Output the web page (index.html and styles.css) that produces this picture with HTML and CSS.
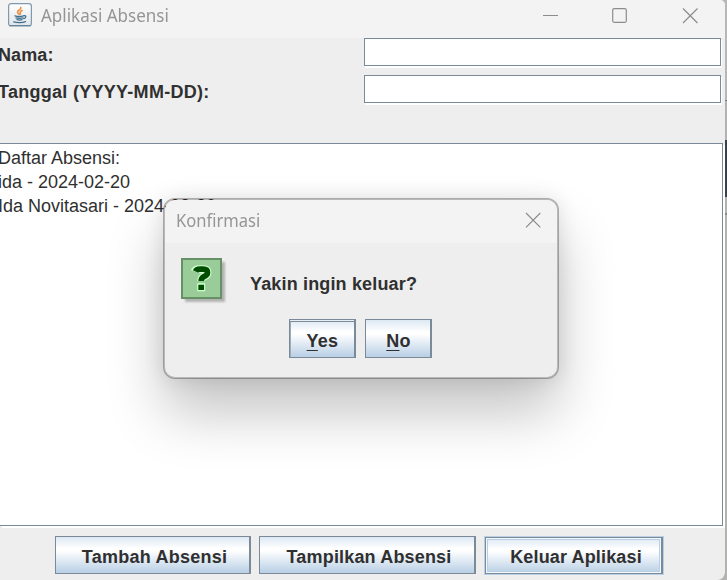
FILE: index.html
```html
<!DOCTYPE html>
<html lang="id">
<head>
<meta charset="utf-8">
<title>Aplikasi Absensi</title>
<link rel="stylesheet" href="styles.css">
</head>
<body>
<div class="desktop">
  <main class="window">
    <header class="titlebar">
      <svg class="java" width="24" height="24" viewBox="0 0 24 24">
        <defs><linearGradient id="tile" x2="0" y2="1"><stop offset="0" stop-color="#fff"/><stop offset="1" stop-color="#dfe5ea"/></linearGradient></defs>
        <rect x=".6" y=".6" width="22.8" height="22.4" rx="2.5" fill="url(#tile)" stroke="#8199ac" stroke-width="1.2"/>
        <path d="M1.5 22.6h21" stroke="#5f7f98"/>
        <g fill="none" stroke-linecap="round">
          <path d="M12.700 4.500c1.200 2-3.800 2.800-3.200 4.800.2.800 1 1.300 1.500 1.900M14.200 7.500c-1.900.8-2.600 1.500-1.900 2.400.4.700.2 1-.2 1.400" stroke="#ee8b3a" stroke-width="1.500"/>
          <path d="M7 12.800c2 .7 6.500.6 8.500 0M8 14.900c2 .5 5 .5 7 0M9 16.700c2 .5 3.600.5 5 0M15.800 12.800c2.800-.7 2.500 2.300.1 2.800M5.700 18.800c3 1 8.800 1 11.800-.2" stroke="#426f90" stroke-width="1.300"/>
        </g>
      </svg>
      <span class="caption">Aplikasi Absensi</span>
      <svg class="controls" width="160" height="20" viewBox="0 0 160 20" fill="none" stroke="#8c8c8c" stroke-width="1.2">
        <path d="M3 10.500h15"/>
        <rect x="72.700" y="3.700" width="13.600" height="13.600" rx="1.500"/>
        <path d="M143 3.500l14.500 14.500M157.500 3.500L143 18"/>
      </svg>
    </header>
    <section class="form">
      <label class="label nama" for="nama">Nama:</label><input class="field" id="nama">
      <label class="label tanggal" for="tanggal">Tanggal (YYYY-MM-DD):</label><input class="field" id="tanggal">
    </section>
    <section class="list">
      <p>Daftar Absensi:</p>
      <p>ida - 2024-02-20</p>
      <p>Ida Novitasari - 2024-02-20</p>
    </section>
    <footer class="actions">
      <button class="btn add"><span>Tambah Absensi</span></button>
      <button class="btn show"><span>Tampilkan Absensi</span></button>
      <button class="btn exit"><span>Keluar Aplikasi</span></button>
    </footer>
  </main>
  <aside class="behind"></aside>
  <section class="dialog" role="dialog" aria-labelledby="dlg">
    <header class="dialog-title">
      <span id="dlg">Konfirmasi</span>
      <svg width="16" height="16" viewBox="0 0 16 16" fill="none" stroke="#8c8c8c" stroke-width="1.200"><path d="M1 1l14.300 14.300M15.300 1L1 15.300"/></svg>
    </header>
    <div class="message">
      <svg class="question" width="50" height="50" viewBox="0 0 50 50">
        <defs><filter id="soft"><feGaussianBlur stdDeviation="1.300"/></filter></defs>
        <rect x="4" y="4" width="40" height="40" fill="#999" opacity=".7" filter="url(#soft)"/>
        <rect x="1" y="1" width="39" height="39" fill="#99cc99" stroke="#669066" stroke-width="2"/>
        <path d="M13.500 13.500q1-2.300 4.500-2.300h4q4.500 0 4.500 3.300 0 2.500-3.200 3.900-3.100 1.400-3.100 4.600M20.200 25.300v8" fill="none" stroke="#cfffcf" stroke-width="8"/>
        <path d="M14.500 13.500q1-2.300 4.500-2.300h3q4.500 0 4.500 3.300 0 2.500-3.200 3.900-3.100 1.400-3.100 4.600M20.200 26.800v5.200" fill="none" stroke="#004d00" stroke-width="5.700"/>
      </svg>
      <strong>Yakin ingin keluar?</strong>
    </div>
    <div class="choices">
      <button class="btn yes"><span><u>Y</u>es</span></button>
      <button class="btn no"><span><u>N</u>o</span></button>
    </div>
  </section>
</div>
</body>
</html>
```
FILE: styles.css
```css
* { box-sizing: border-box; }
body { margin: 0; font: 18px/24px "Liberation Sans", Arial, sans-serif; color: #303030; }
.desktop { position: relative; display: flex; width: 727px; height: 580px; overflow: hidden; background: #b5b5b5; }
.window { width: 725px; height: 580px; display: flex; flex-direction: column; background: #eee; border-radius: 0 5px 8px 0; overflow: hidden; }
.behind { width: 2px; background: linear-gradient(#b7b7b7 100px, #777 100px, #777 101px, #b2b2b2 101px, #b2b2b2 140px, #394047 140px, #394047 197px, #b2b2b0 197px, #b2b2b0 213px, #858585 213px, #858585 215px, #b2b2b0 215px); }
.titlebar { flex: none; height: 38px; background: #f3f3f3; display: flex; align-items: flex-start; padding: 3px 26px 0 8px; }
.caption { margin: 0 0 0 9px; font: 18px/24px "Noto Sans", sans-serif; color: #959595; white-space: nowrap; transform: scaleX(.945); transform-origin: left; }
.controls { margin: 2px -1px 0 auto; }
.form { flex: none; height: 105px; display: grid; grid-template-columns: 364px 357px; grid-template-rows: 37px 37px; }
.label { margin-left: -2px; padding-top: 5px; font-weight: bold; letter-spacing: .28px; white-space: nowrap; }
.nama { letter-spacing: .1px; }
.field { height: 28px; width: 357px; padding: 0; border: 1px solid #7a8a99; border-radius: 0; outline: 0; background: #fff; box-shadow: 1px 2px #fff; }
.list { flex: none; width: 723px; height: 383px; border: 1px solid #7a8a99; border-left: 0; background: #fff; box-shadow: 2px 2px #fff; padding-top: 2px; }
.list p { margin: 0 0 0 -2px; white-space: nowrap; }
.actions { display: flex; gap: 8px; padding: 10px 0 0 55px; }
.btn { height: 39px; flex: none; padding: 2px 0 0; border: 1px solid #7a8a99; border-right-width: 2px; border-radius: 0; background: linear-gradient(#dde8f3 0, #fff 32%, #fff 38%, #b8cfe5 100%); color: #303030; font: bold 18px/24px "Liberation Sans", Arial, sans-serif; letter-spacing: .25px; white-space: nowrap; }
.add { width: 196px; height: 38px; padding: 4px 0 0 4px; letter-spacing: .25px; }
.show { width: 217px; height: 38px; padding: 4px 0 0 4px; letter-spacing: .17px; }
.exit { width: 178px; height: 37px; margin: 1px 0 0 1px; padding: 1px 0 0 5px; outline: 1px solid #b8cfe5; box-shadow: inset 0 0 0 1px #f3f7fb, inset 0 0 0 2px #b8cfe5; letter-spacing: .15px; }
.exit span { position: relative; top: 1px; }
.dialog { position: absolute; left: 163px; top: 198px; width: 396px; height: 181px; border: 2px solid rgba(0,0,0,.28); border-radius: 12px; background: #eee padding-box; overflow: hidden; box-shadow: 0 34px 56px rgba(0,0,0,.23), 0 0 20px rgba(0,0,0,.1); }
.dialog-title { height: 43px; padding: 8px 16px 0 11px; display: flex; justify-content: space-between; background: #f3f3f3; color: #959595; font: 18px/24px "Noto Sans", sans-serif; }
.dialog-title span { transform: scaleX(.92); transform-origin: left; }
.dialog-title svg { margin-top: 4px; }
.message { display: flex; height: 76px; padding: 15px 0 0 16px; }
.message strong { margin: 14px 0 0 19px; letter-spacing: .16px; }
.choices { display: flex; gap: 9px; padding-left: 124px; }
.choices .btn { padding: 4px 0 0 1px; }
.yes { width: 67px; box-shadow: inset 0 1px #e8eef4, inset 0 2px #7a8a99, inset 1px 0 #9eacba; }
.no { width: 67px; }
.btn u { text-decoration-thickness: 1px; text-underline-offset: 3px; text-decoration-skip-ink: none; }
```
